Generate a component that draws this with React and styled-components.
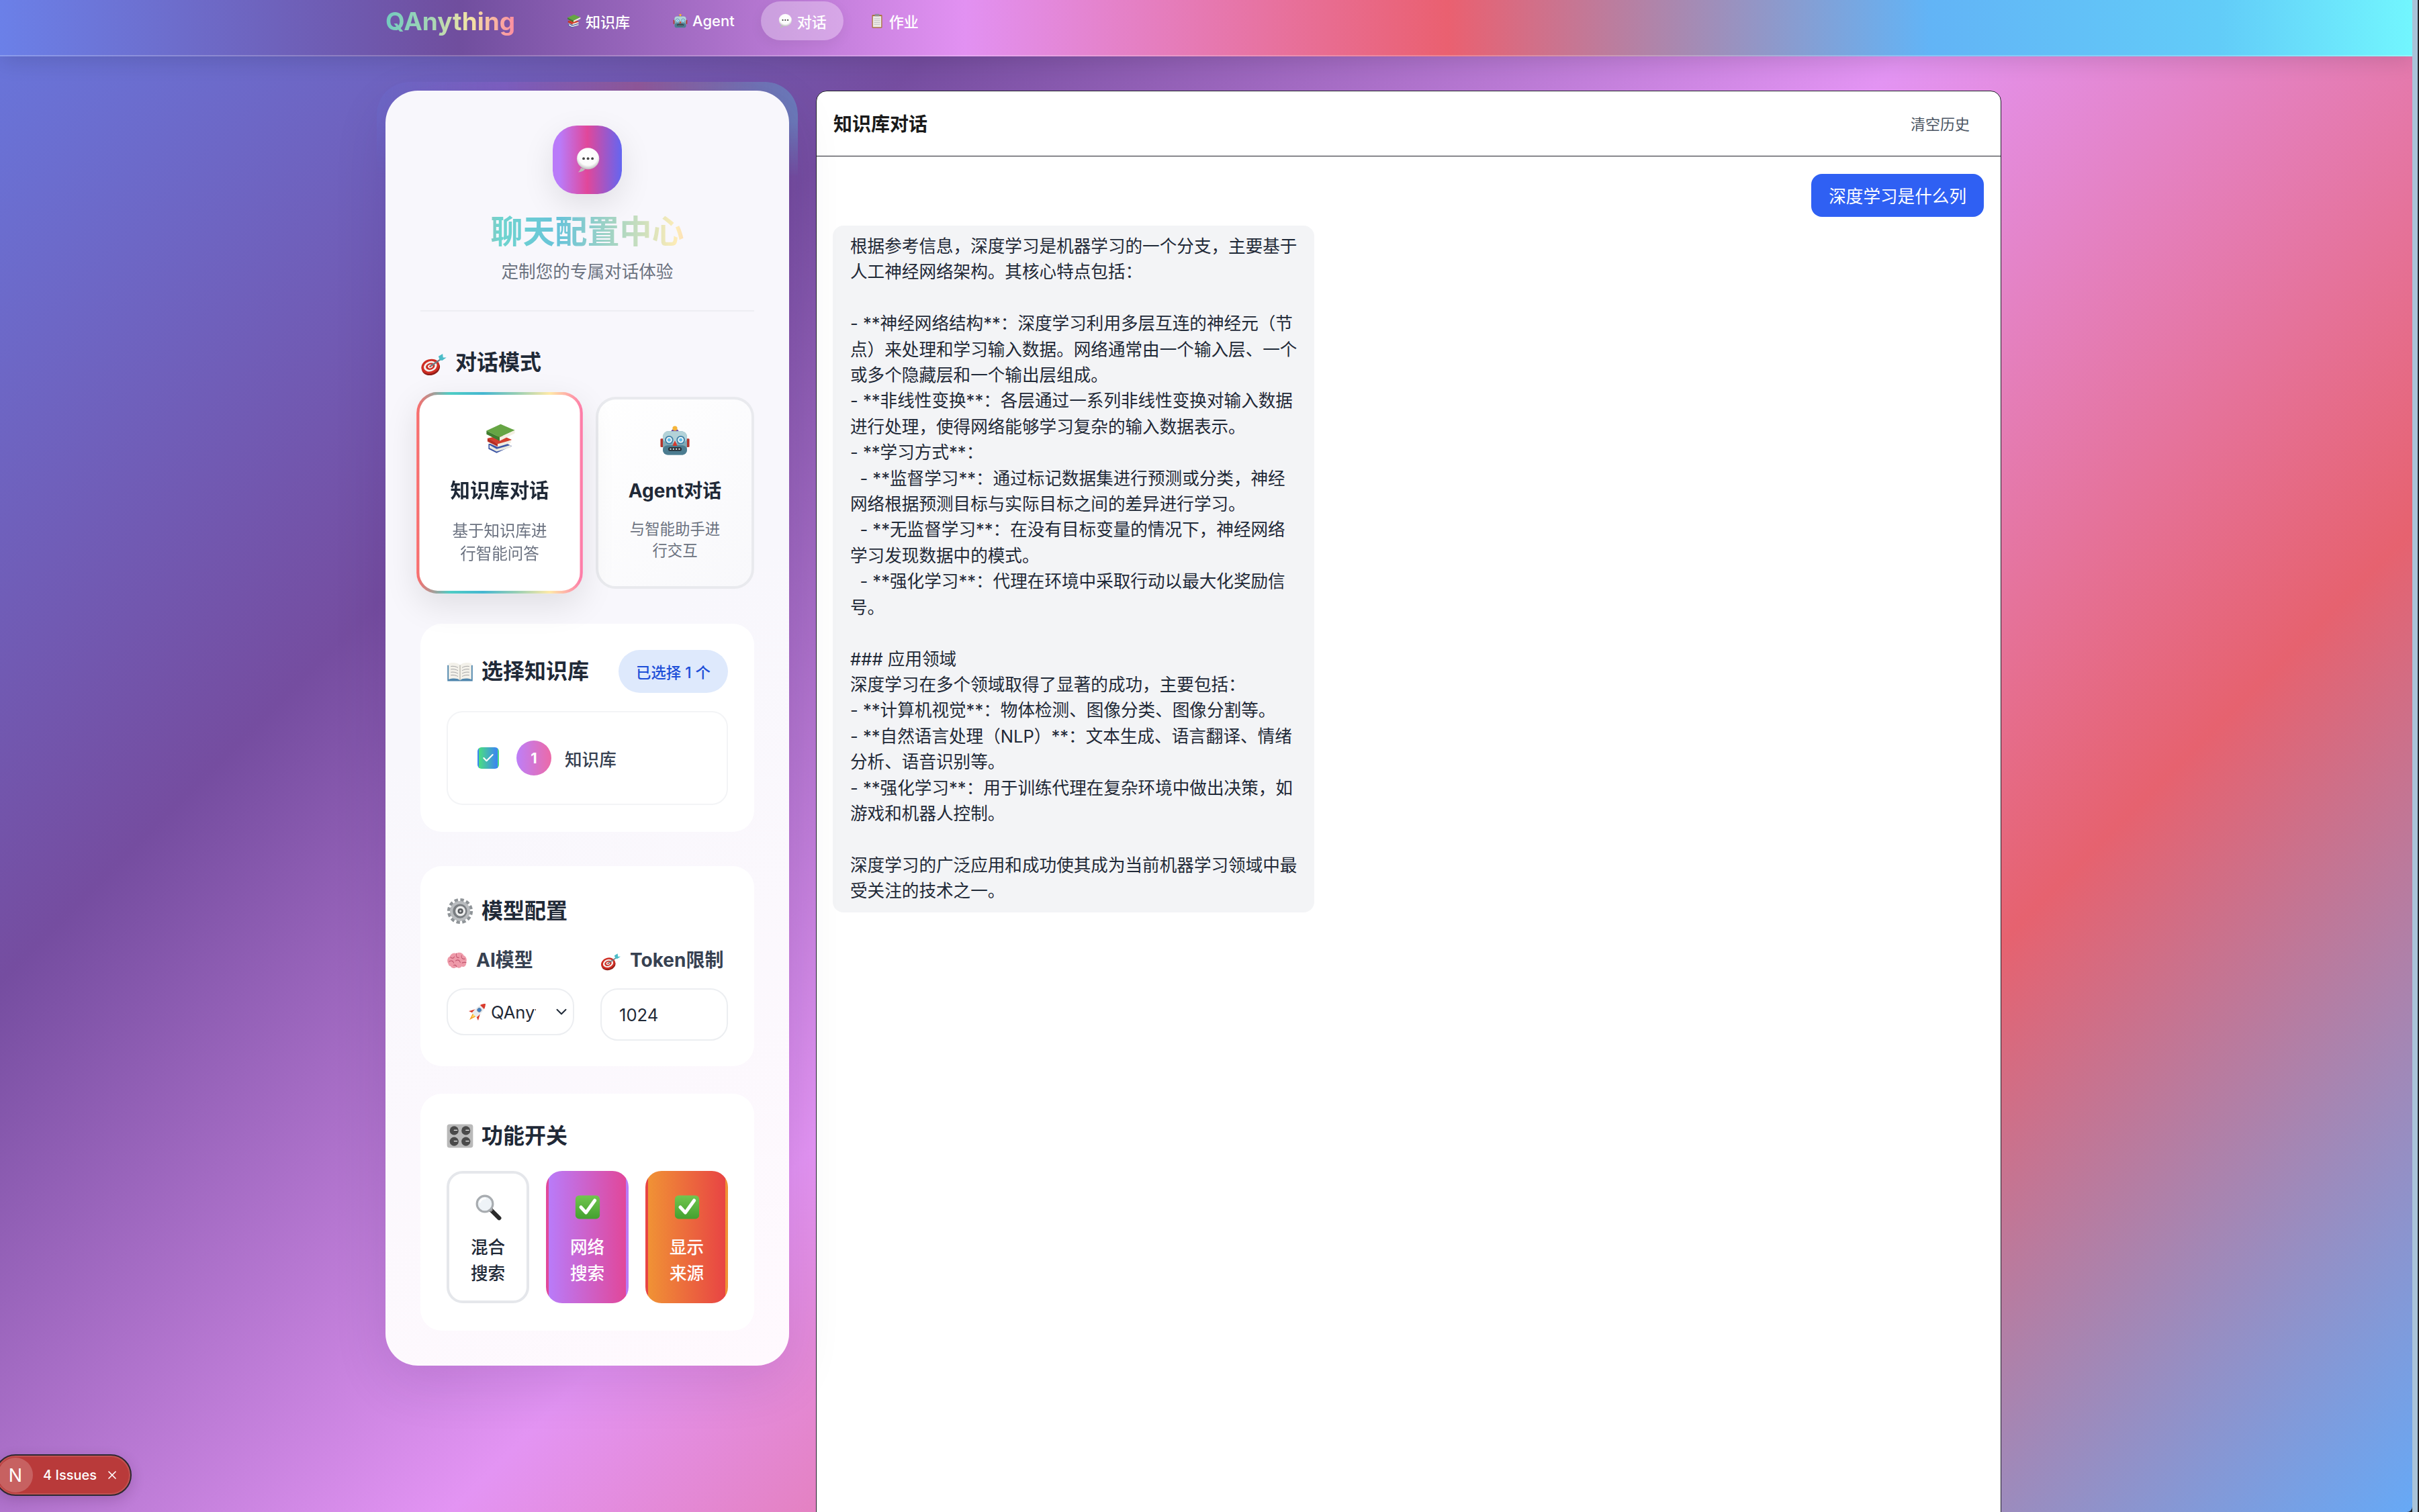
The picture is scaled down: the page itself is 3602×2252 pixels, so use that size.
import React from "react";
import styled, { createGlobalStyle } from "styled-components";
import { X, ChevronDown, Check } from "lucide-react";

const Global = createGlobalStyle`
  html, body { margin: 0; padding: 0; background: #23252b; }
  body { font-family: Inter, "Noto Sans CJK SC", sans-serif; overflow: hidden; }
  * { box-sizing: border-box; }
`;

const RAINBOW = "#ff6b6b 0%, #4ecdc4 20%, #45b7d1 40%, #96ceb4 60%, #ffeaa7 80%, #fd79a8 100%";

const Frame = styled.div`
  display: flex;
  width: 3602px;
  height: 2252px;
  overflow: hidden;
`;
const WindowEdge = styled.div`
  width: 10px;
  flex: none;
  background: #a9c3d9;
  border-right: 2px solid #23252b;
`;
const Page = styled.div`
  position: relative;
  isolation: isolate;
  width: 3592px;
  flex: none;
  height: 2252px;
  overflow: hidden;
  border-bottom-right-radius: 8px;
  background: linear-gradient(135deg, #6877dd 0%, #754da0 25%, #e394f3 50%, #e6626f 75%, #66a9f6 100%);
`;
const Nav = styled.header`
  height: 84px;
  padding: 2px 0 0 574px;
  display: flex;
  align-items: flex-start;
  border-bottom: 2px solid rgba(255, 255, 255, 0.22);
  box-shadow: 0 8px 32px rgba(0, 0, 0, 0.12);
  background: linear-gradient(90deg, #6b80e8 0%, #704e9e 19%, #e291f2 40%, #ea6070 60%, #62b4f6 80%, #62ccf8 92%, #72f6fe 100%);
`;
const Logo = styled.div`
  width: 244px;
  flex: none;
  font-size: 37px;
  line-height: 60px;
  font-weight: 700;
  > span {
    background: linear-gradient(90deg, #72cbbf 0%, #a5d5b5 35%, #f3e5a5 65%, #fd8da0 100%);
    -webkit-background-clip: text;
    background-clip: text;
    color: transparent;
  }
`;
const NavList = styled.nav`
  display: flex;
  gap: 14px;
`;
const NavItem = styled.a`
  display: flex;
  align-items: center;
  gap: 7px;
  height: 58px;
  padding: 0 25px;
  border-radius: 29px;
  color: #fff;
  font-size: 22px;
  font-weight: 500;
  background: ${(p) => (p.$active ? "rgba(255,255,255,0.3)" : "transparent")};
  box-shadow: ${(p) => (p.$active ? "0 6px 20px rgba(0,0,0,0.06)" : "none")};
`;
const Main = styled.main`
  display: flex;
  align-items: flex-start;
  gap: 40px;
  padding: 51px 0 0 574px;
`;
const Sidebar = styled.aside`
  position: relative;
  width: 601px;
  flex: none;
  height: 1899px;
  padding: 52px 52px 0;
  border-radius: 48px;
  background: linear-gradient(150deg, #f8f7fc 0%, #f8f7fc 45%, #fff9fe 100%);
  box-shadow: 0 24px 80px rgba(40, 10, 80, 0.12);
  &::before {
    content: "";
    position: absolute;
    z-index: -1;
    top: -13px;
    left: -13px;
    right: -13px;
    height: 150px;
    border-radius: 48px 48px 0 0;
    background: linear-gradient(90deg, rgba(102,126,234,.15) 0%, rgba(150,100,210,.35) 30%, rgba(190,90,120,.4) 62%, rgba(110,140,190,.55) 90%, rgba(100,150,200,.6) 100%);
    -webkit-mask-image: linear-gradient(#000 40%, transparent 95%);
    mask-image: linear-gradient(#000 40%, transparent 95%);
  }
`;
const SideHeader = styled.div`
  display: flex;
  flex-direction: column;
  align-items: center;
  padding-bottom: 38px;
  border-bottom: 2px solid #eeeef3;
`;
const HeaderIcon = styled.div`
  width: 103px;
  height: 102px;
  border-radius: 36px;
  display: flex;
  align-items: center;
  justify-content: center;
  background: linear-gradient(90deg, #b97bf9 0%, #b97bf9 10%, #e1479a 50%, #6366f1 100%);
  box-shadow: 0 16px 48px rgba(0, 0, 0, 0.1);
`;
const SideTitle = styled.h1`
  margin: 28px 0 0;
  width: 440px;
  text-align: center;
  font-size: 48px;
  line-height: 56px;
  font-weight: 700;
  opacity: 0.8;
  background: linear-gradient(90deg, ${RAINBOW});
  -webkit-background-clip: text;
  background-clip: text;
  color: transparent;
`;
const SideSub = styled.p`
  margin: 13px 0 0;
  font-size: 25.6px;
  line-height: 38px;
  color: #6b7280;
`;
const Heading = styled.h2`
  display: flex;
  align-items: center;
  gap: 12px;
  margin: 0;
  font-size: 32px;
  line-height: 44px;
  font-weight: 700;
  color: #1f2937;
`;
const ModeHeading = styled(Heading)`
  margin-top: 54px;
`;
const ModeGrid = styled.div`
  display: grid;
  grid-template-columns: 236px 236px;
  gap: 25px;
  margin-top: 29px;
`;
const ModeCard = styled.div`
  height: 286px;
  padding: 38px 40px 0;
  display: flex;
  flex-direction: column;
  align-items: center;
  text-align: center;
  border: 4px solid ${(p) => (p.$active ? "transparent" : "#e9eaee")};
  border-radius: 30px;
  background: ${(p) =>
    p.$active
      ? `linear-gradient(#fff, #fff) padding-box, linear-gradient(90deg, ${RAINBOW}) border-box`
      : "linear-gradient(135deg, #fff 0%, #f8f8fb 100%)"};
  box-shadow: ${(p) => (p.$active ? "0 16px 48px rgba(0,0,0,0.1)" : "none")};
  transform: ${(p) => (p.$active ? "scale(1.05)" : "none")};
`;
const ModeTitle = styled.div`
  margin-top: 32px;
  font-size: 28px;
  line-height: 40px;
  font-weight: 700;
  color: #1f2937;
  white-space: nowrap;
`;
const ModeDesc = styled.div`
  margin-top: 21px;
  font-size: 22.4px;
  line-height: 32px;
  color: #6b7280;
`;
const Section = styled.section`
  margin-top: ${(p) => p.$gap}px;
  height: ${(p) => p.$height}px;
  padding: ${(p) => p.$top}px 39px 0 39px;
  border-radius: 32px;
  background: #fff;
`;
const SectionHead = styled.div`
  display: flex;
  align-items: center;
  justify-content: space-between;
`;
const Badge = styled.span`
  height: 64px;
  width: 163px;
  display: flex;
  align-items: center;
  justify-content: center;
  border-radius: 32px;
  background: #dee9fc;
  color: #1d4ed8;
  font-size: 22.4px;
  font-weight: 500;
  white-space: pre;
`;
const KbBox = styled.div`
  margin-top: 27px;
  height: 140px;
  padding: 0 44px;
  display: flex;
  align-items: center;
  border: 2px solid #f3f4f6;
  border-radius: 24px;
`;
const CheckMark = styled.span`
  width: 32px;
  height: 32px;
  flex: none;
  display: flex;
  align-items: center;
  justify-content: center;
  border: 2px solid transparent;
  border-radius: 6px;
  background: linear-gradient(90deg, #4ade80 0%, #3b82f6 100%);
  color: #fff;
`;
const Avatar = styled.span`
  width: 52px;
  height: 52px;
  flex: none;
  margin-left: 26px;
  border-radius: 50%;
  display: flex;
  align-items: center;
  justify-content: center;
  color: #fff;
  font-size: 22px;
  font-weight: 700;
  background: linear-gradient(90deg, #bd7ff8 0%, #ec6aa8 100%);
`;
const KbName = styled.span`
  margin-left: 20px;
  font-size: 25.6px;
  font-weight: 500;
  color: #374151;
`;
const FieldGrid = styled.div`
  display: grid;
  grid-template-columns: 190px 190px;
  gap: 39px;
  margin-top: 31px;
  align-items: start;
`;
const Field = styled.div`
  display: flex;
  flex-direction: column;
  gap: 22px;
`;
const FieldLabel = styled.label`
  display: flex;
  align-items: center;
  gap: 13px;
  font-size: 28px;
  line-height: 40px;
  font-weight: 700;
  color: #374151;
  white-space: nowrap;
`;
const SelectBox = styled.div`
  height: 70px;
  padding: 0 4px 0 29px;
  display: flex;
  align-items: center;
  justify-content: space-between;
  border: 2px solid #eceef1;
  border-radius: 26px;
  background: #fff;
  color: #1f2937;
`;
const SelectValue = styled.div`
  width: 102px;
  overflow: hidden;
  display: flex;
  align-items: center;
  gap: 5px;
  font-size: 25.6px;
  white-space: nowrap;
`;
const InputBox = styled.div`
  height: 78px;
  padding: 0 26px;
  display: flex;
  align-items: center;
  border: 2px solid #eceef1;
  border-radius: 26px;
  background: #fff;
  font-size: 25.6px;
  color: #1f2937;
`;
const ToggleGrid = styled.div`
  display: grid;
  grid-template-columns: repeat(3, 123px);
  gap: 25px;
  margin-top: 30px;
`;
const Toggle = styled.div`
  height: 197px;
  padding: 30px 24px 0;
  display: flex;
  flex-direction: column;
  align-items: center;
  text-align: center;
  border: 4px solid ${(p) => (p.$bg ? "transparent" : "#e5e7eb")};
  border-radius: 24px;
  background: ${(p) => p.$bg || "#fff"};
  color: ${(p) => (p.$bg ? "#fff" : "#1f2937")};
  font-size: 25.6px;
  line-height: 39px;
  font-weight: 500;
`;
const ToggleLabel = styled.div`
  margin-top: 20px;
`;
const ChatPanel = styled.section`
  width: 1765px;
  flex: none;
  height: 2200px;
  border: 1px solid #20202a;
  border-radius: 16px;
  background: #fff;
  overflow: hidden;
`;
const ChatHead = styled.div`
  height: 97px;
  padding: 0 46px 3px 25px;
  display: flex;
  align-items: center;
  justify-content: space-between;
  border-bottom: 1px solid #20202a;
`;
const ChatTitle = styled.h2`
  margin: 0;
  font-size: 28px;
  font-weight: 700;
  color: #1a1a1a;
`;
const ClearBtn = styled.button`
  padding: 0;
  border: 0;
  background: none;
  font: inherit;
  font-size: 22px;
  color: #4b5563;
`;
const ChatBody = styled.div`
  padding: 26px 25px 26px 24px;
  display: flex;
  flex-direction: column;
  gap: 13px;
`;
const UserBubble = styled.div`
  align-self: flex-end;
  height: 64px;
  padding: 0 26px 2px;
  display: flex;
  align-items: center;
  border-radius: 16px;
  background: #2f60f3;
  color: #fff;
  font-size: 25.6px;
`;
const BotBubble = styled.div`
  align-self: flex-start;
  width: 717px;
  padding: 12px 26px;
  border-radius: 16px;
  background: #f3f4f6;
  color: #1f2937;
  font-size: 25.6px;
  line-height: 38.4px;
  white-space: pre;
`;
const IssueBadge = styled.div`
  position: absolute;
  left: -8px;
  top: 2166px;
  width: 204px;
  height: 62px;
  display: flex;
  align-items: center;
  border: 2px solid #2c2a33;
  border-radius: 31px;
  background: #b93a3a;
  box-shadow: inset 0 0 0 2px rgba(255, 255, 255, 0.12), 0 6px 20px rgba(60, 20, 60, 0.2);
  color: #fff;
`;
const IssueLogo = styled.span`
  width: 52px;
  height: 52px;
  margin-left: 3px;
  border-radius: 50%;
  flex: none;
  display: flex;
  align-items: center;
  justify-content: center;
  background: rgba(255, 255, 255, 0.2);
  font-size: 27px;
  font-weight: 400;
`;
const IssueText = styled.span`
  margin-left: 15px;
  font-size: 20px;
  font-weight: 500;
  white-space: nowrap;
`;
const IssueClose = styled.span`
  margin-left: 13px;
  display: flex;
`;

const Glyph = styled.svg`
  width: ${(p) => p.$size}px;
  height: ${(p) => p.$size}px;
  flex: none;
  display: block;
`;
const Emoji = ({ size, children }) => (
  <Glyph $size={size} viewBox="0 0 64 64" aria-hidden="true">{children}</Glyph>
);

const Books = ({ size }) => (
  <Emoji size={size}>
    <path d="M10 44 40 40 56 48 26 62 10 54Z" fill="#3c55a5" />
    <path d="M12 46 26 54 54 46 54 51 26 59 12 52Z" fill="#e8e8e0" />
    <path d="M8 33 36 27 56 36 28 47Z" fill="#d23f2e" />
    <path d="M10 36 28 44 54 37 54 42 28 50 10 42Z" fill="#f0ebe0" />
    <path d="M8 33 28 44 28 49 8 39Z" fill="#b52d22" />
    <path d="M6 18 34 5 62 17 32 31Z" fill="#66a544" />
    <path d="M6 18 32 31 32 38 6 25Z" fill="#3f7d2d" />
    <path d="M32 31 62 17 62 23 32 38Z" fill="#f3efe2" />
  </Emoji>
);
const Robot = ({ size }) => (
  <Emoji size={size}>
    <rect x="2" y="28" width="8" height="18" rx="2" fill="#b5352c" />
    <rect x="54" y="28" width="8" height="18" rx="2" fill="#b5352c" />
    <path d="M24 14a8 6 0 0 1 16 0Z" fill="#6a3fa0" />
    <circle cx="32" cy="7" r="5" fill="#f5b53a" />
    <rect x="7" y="13" width="50" height="49" rx="11" fill="#7fa9b5" />
    <rect x="7" y="13" width="50" height="24" rx="11" fill="#b3d2d8" />
    <rect x="7" y="42" width="50" height="20" rx="10" fill="#4b7c90" />
    <circle cx="20" cy="31" r="7.5" fill="#e9f3f5" stroke="#3d7fa6" strokeWidth="2.5" />
    <circle cx="44" cy="31" r="7.5" fill="#e9f3f5" stroke="#3d7fa6" strokeWidth="2.5" />
    <circle cx="20" cy="31" r="3.4" fill="#5dbbe8" />
    <circle cx="44" cy="31" r="3.4" fill="#5dbbe8" />
    <path d="M32 32 37 43H27Z" fill="#d8382c" />
    <rect x="18" y="46" width="28" height="8" rx="4" fill="#28333b" />
    <g fill="#e6e6e6">
      <circle cx="23" cy="50" r="1.6" /><circle cx="29" cy="50" r="1.6" />
      <circle cx="35" cy="50" r="1.6" /><circle cx="41" cy="50" r="1.6" />
    </g>
  </Emoji>
);
const Bubble = ({ size }) => (
  <Emoji size={size}>
    <defs>
      <radialGradient id="bub" cx="50%" cy="38%" r="62%">
        <stop offset="0" stopColor="#fff" />
        <stop offset=".7" stopColor="#fbfbfb" />
        <stop offset="1" stopColor="#bdbdbd" />
      </radialGradient>
    </defs>
    <path d="M15 52C13 58 11 61 8 63 15 63 22 60 26 55Z" fill="#bcbcbc" />
    <ellipse cx="33" cy="29" rx="28" ry="27" fill="url(#bub)" />
    <circle cx="22" cy="29" r="3.2" fill="#444" />
    <circle cx="33" cy="29" r="3.2" fill="#444" />
    <circle cx="44" cy="29" r="3.2" fill="#444" />
  </Emoji>
);
const Clipboard = ({ size }) => (
  <Emoji size={size}>
    <rect x="10" y="6" width="44" height="57" rx="4" fill="#a9763f" />
    <rect x="14" y="12" width="36" height="47" fill="#eceae6" />
    <rect x="22" y="2" width="20" height="10" rx="2" fill="#8f8f95" />
    <g fill="#bcbcc0">
      <rect x="19" y="22" width="26" height="2.5" /><rect x="19" y="30" width="26" height="2.5" />
      <rect x="19" y="38" width="26" height="2.5" /><rect x="19" y="46" width="26" height="2.5" />
    </g>
  </Emoji>
);
const Target = ({ size }) => (
  <Emoji size={size}>
    <g transform="rotate(-18 24 42)">
      <ellipse cx="24" cy="45" rx="22" ry="17" fill="#8e1d17" />
      <ellipse cx="24" cy="41" rx="22" ry="17" fill="#cf2e24" />
      <ellipse cx="24" cy="41" rx="16" ry="12" fill="#f4f1ee" />
      <ellipse cx="24" cy="41" rx="11" ry="8" fill="#cf2e24" />
      <ellipse cx="24" cy="41" rx="6" ry="4.4" fill="#f4f1ee" />
      <ellipse cx="24" cy="41" rx="2.6" ry="2" fill="#cf2e24" />
    </g>
    <path d="M25 40 50 23" stroke="#6d7d85" strokeWidth="3.6" strokeLinecap="round" />
    <path d="M46 26 43 17 53 11 54 20 62 20 52 27Z" fill="#4cbcc8" />
  </Emoji>
);
const OpenBook = ({ size }) => (
  <Emoji size={size}>
    <path d="M2 17H62V55H2Z" fill="#4f86ad" />
    <path d="M5 13C14 10 26 11 32 17 38 11 50 10 59 13V51C50 48 38 48 32 53 26 48 14 48 5 51Z" fill="#f3f1ea" />
    <path d="M32 17V53" stroke="#a9a79c" strokeWidth="1.6" />
    <g stroke="#a5a5a5" strokeWidth="1.6" fill="none">
      <path d="M10 20C16 19 22 20 27 23" /><path d="M10 27C16 26 22 27 27 30" />
      <path d="M10 34C16 33 22 34 27 37" /><path d="M10 41C16 40 22 41 27 44" />
      <path d="M54 20C48 19 42 20 37 23" /><path d="M54 27C48 26 42 27 37 30" />
      <path d="M54 34C48 33 42 34 37 37" /><path d="M54 41C48 40 42 41 37 44" />
    </g>
  </Emoji>
);
const Gear = ({ size }) => (
  <Emoji size={size}>
    <circle cx="32" cy="32" r="26" fill="none" stroke="#8f9498" strokeWidth="9" strokeDasharray="8.2 5.4" />
    <circle cx="32" cy="32" r="24" fill="#b9bcbf" />
    <circle cx="32" cy="32" r="17" fill="#7a7e82" />
    <circle cx="33" cy="32" r="12" fill="#eceded" />
    <circle cx="33" cy="32" r="6.5" fill="#55585c" />
    <circle cx="33" cy="32" r="2.6" fill="#cfd1d3" />
  </Emoji>
);
const Brain = ({ size }) => (
  <Emoji size={size}>
    <g transform="translate(0 -8) scale(1 1.25)">
      <path d="M5 40C0 33 3 24 10 22 14 14 24 12 30 15 38 10 50 13 53 20 60 22 64 30 60 37 62 44 54 50 46 47 42 52 34 51 31 48 24 53 15 51 12 46 8 46 6 44 5 40Z" fill="#ee9aa9" />
      <g fill="none" stroke="#c1566f" strokeWidth="2" strokeLinecap="round">
        <path d="M12 24C16 28 22 27 24 23" /><path d="M30 15C28 22 32 26 38 25" />
        <path d="M46 20C44 26 50 30 56 28" /><path d="M8 35C14 31 20 33 22 38" />
        <path d="M28 33C34 29 40 31 42 37" /><path d="M48 38C52 36 56 37 60 37" />
        <path d="M31 48C30 44 26 42 22 44" />
      </g>
    </g>
  </Emoji>
);
const Rocket = ({ size }) => (
  <Emoji size={size}>
    <g transform="rotate(45 32 32)">
      <path d="M25 46H39L32 68Z" fill="#f7a02c" />
      <path d="M28 46H36L32 58Z" fill="#fde26a" />
      <path d="M22 30 11 50 22 46Z" fill="#d93a2b" />
      <path d="M42 30 53 50 42 46Z" fill="#d93a2b" />
      <path d="M32-4C43 8 45 26 42 47H22C19 26 21 8 32-4Z" fill="#e8ecf0" />
      <path d="M32-4C36 0 39 5 41 11H23C25 5 28 0 32-4Z" fill="#d93a2b" />
      <circle cx="32" cy="24" r="6.5" fill="#3f7fc4" stroke="#7f8f9e" strokeWidth="2" />
    </g>
  </Emoji>
);
const Knobs = ({ size }) => (
  <Emoji size={size}>
    <rect x="1" y="4" width="62" height="56" rx="6" fill="#b9b9b9" />
    {[[18, 19], [46, 19], [18, 45], [46, 45]].map(([x, y]) => (
      <g key={`${x}-${y}`}>
        <circle cx={x} cy={y} r="10.5" fill="#4a4a4a" />
        <path d={`M${x} ${y - 1}h7`} stroke="#eee" strokeWidth="2" strokeLinecap="round" />
      </g>
    ))}
  </Emoji>
);
const Magnifier = ({ size }) => (
  <Emoji size={size}>
    <path d="M38 38 58 58" stroke="#2b2b2b" strokeWidth="10" strokeLinecap="round" />
    <path d="M34 34 41 41" stroke="#9a9a9a" strokeWidth="7" />
    <circle cx="24" cy="24" r="19" fill="#eef3f7" stroke="#a8acb0" strokeWidth="5" />
    <path d="M12 20C14 14 19 11 25 11" stroke="#fff" strokeWidth="4" fill="none" strokeLinecap="round" />
  </Emoji>
);
const GreenCheck = ({ size }) => (
  <Emoji size={size}>
    <defs>
      <linearGradient id="grn" x1="0" y1="0" x2="0" y2="1">
        <stop offset="0" stopColor="#72c64f" />
        <stop offset="1" stopColor="#43a02f" />
      </linearGradient>
    </defs>
    <rect x="3" y="4" width="58" height="56" rx="9" fill="url(#grn)" />
    <path d="M16 32 28 45 49 16" fill="none" stroke="#fff" strokeWidth="8" strokeLinecap="round" strokeLinejoin="round" />
  </Emoji>
);

const ANSWER = `根据参考信息，深度学习是机器学习的一个分支，主要基于
人工神经网络架构。其核心特点包括：

- **神经网络结构**：深度学习利用多层互连的神经元（节
点）来处理和学习输入数据。网络通常由一个输入层、一个
或多个隐藏层和一个输出层组成。
- **非线性变换**：各层通过一系列非线性变换对输入数据
进行处理，使得网络能够学习复杂的输入数据表示。
- **学习方式**：
  - **监督学习**：通过标记数据集进行预测或分类，神经
网络根据预测目标与实际目标之间的差异进行学习。
  - **无监督学习**：在没有目标变量的情况下，神经网络
学习发现数据中的模式。
  - **强化学习**：代理在环境中采取行动以最大化奖励信
号。

### 应用领域
深度学习在多个领域取得了显著的成功，主要包括：
- **计算机视觉**：物体检测、图像分类、图像分割等。
- **自然语言处理（NLP）**：文本生成、语言翻译、情绪
分析、语音识别等。
- **强化学习**：用于训练代理在复杂环境中做出决策，如
游戏和机器人控制。

深度学习的广泛应用和成功使其成为当前机器学习领域中最
受关注的技术之一。`;

export default function App() {
  return (
    <Frame>
      <Global />
      <Page>
        <Nav>
          <Logo><span>QAnything</span></Logo>
          <NavList>
            <NavItem><Books size={22} />知识库</NavItem>
            <NavItem><Robot size={22} />Agent</NavItem>
            <NavItem $active><Bubble size={22} />对话</NavItem>
            <NavItem><Clipboard size={22} />作业</NavItem>
          </NavList>
        </Nav>
        <Main>
          <Sidebar>
            <SideHeader>
              <HeaderIcon><Bubble size={38} /></HeaderIcon>
              <SideTitle>聊天配置中心</SideTitle>
              <SideSub>定制您的专属对话体验</SideSub>
            </SideHeader>
            <ModeHeading><Target size={40} />对话模式</ModeHeading>
            <ModeGrid>
              <ModeCard $active>
                <Books size={46} />
                <ModeTitle>知识库对话</ModeTitle>
                <ModeDesc>基于知识库进行智能问答</ModeDesc>
              </ModeCard>
              <ModeCard>
                <Robot size={46} />
                <ModeTitle>Agent对话</ModeTitle>
                <ModeDesc>与智能助手进行交互</ModeDesc>
              </ModeCard>
            </ModeGrid>
            <Section $gap={52} $height={310} $top={39}>
              <SectionHead>
                <Heading><OpenBook size={40} />选择知识库</Heading>
                <Badge>已选择 1 个</Badge>
              </SectionHead>
              <KbBox>
                <CheckMark><Check size={20} strokeWidth={2.5} /></CheckMark>
                <Avatar>1</Avatar>
                <KbName>知识库</KbName>
              </KbBox>
            </Section>
            <Section $gap={51} $height={298} $top={45}>
              <Heading><Gear size={40} />模型配置</Heading>
              <FieldGrid>
                <Field>
                  <FieldLabel><Brain size={31} />AI模型</FieldLabel>
                  <SelectBox>
                    <SelectValue><Rocket size={30} />QAnything</SelectValue>
                    <ChevronDown size={26} strokeWidth={1.8} />
                  </SelectBox>
                </Field>
                <Field>
                  <FieldLabel><Target size={31} />Token限制</FieldLabel>
                  <InputBox>1024</InputBox>
                </Field>
              </FieldGrid>
            </Section>
            <Section $gap={41} $height={353} $top={41}>
              <Heading><Knobs size={40} />功能开关</Heading>
              <ToggleGrid>
                <Toggle><Magnifier size={40} /><ToggleLabel>混合搜索</ToggleLabel></Toggle>
                <Toggle $bg="linear-gradient(90deg, #b97bf9 0%, #e1479a 100%)"><GreenCheck size={40} /><ToggleLabel>网络搜索</ToggleLabel></Toggle>
                <Toggle $bg="linear-gradient(90deg, #f09235 0%, #e84444 100%)"><GreenCheck size={40} /><ToggleLabel>显示来源</ToggleLabel></Toggle>
              </ToggleGrid>
            </Section>
          </Sidebar>
          <ChatPanel>
            <ChatHead>
              <ChatTitle>知识库对话</ChatTitle>
              <ClearBtn>清空历史</ClearBtn>
            </ChatHead>
            <ChatBody>
              <UserBubble>深度学习是什么列</UserBubble>
              <BotBubble>{ANSWER}</BotBubble>
            </ChatBody>
          </ChatPanel>
        </Main>
        <IssueBadge>
          <IssueLogo>N</IssueLogo>
          <IssueText>4 Issues</IssueText>
          <IssueClose><X size={20} strokeWidth={2} /></IssueClose>
        </IssueBadge>
      </Page>
      <WindowEdge />
    </Frame>
  );
}
